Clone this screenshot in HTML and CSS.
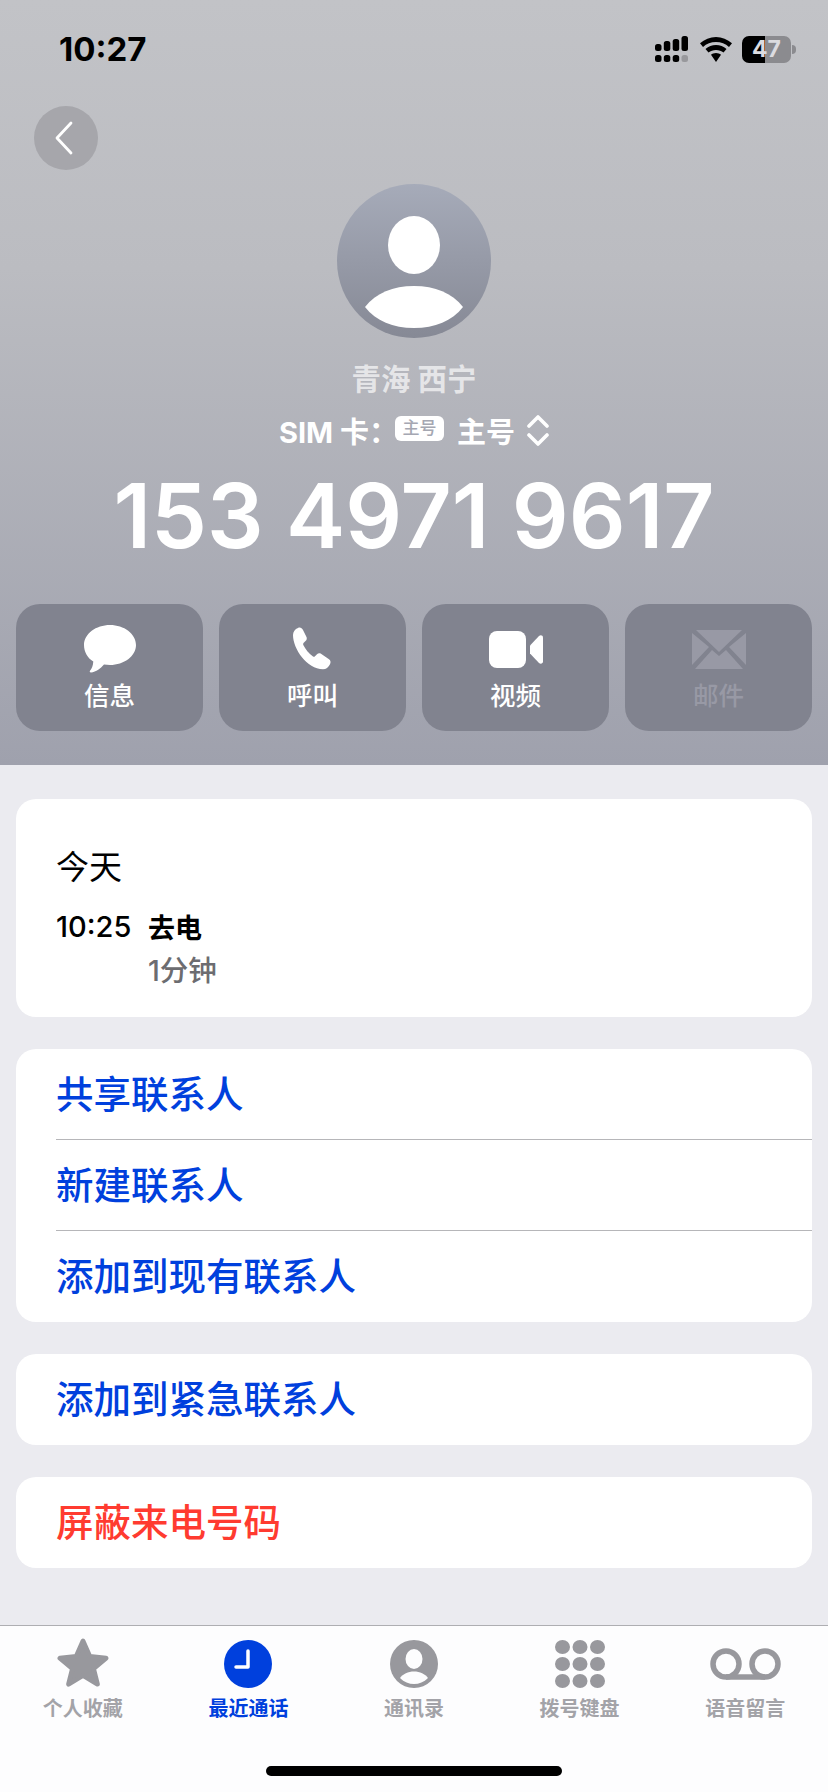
FILE: index.html
```html
<!DOCTYPE html>
<html lang="zh-CN">
<head>
    <meta charset="UTF-8">
    <meta name="viewport" content="width=device-width, initial-scale=1.0">
    <title>青海 西宁</title>
    <link rel="stylesheet" href="styles.css">
</head>
<body>
    <header class="hero">
        <div class="status-bar">
            <span class="clock">10:27</span>
            <div class="status-icons">
                <svg class="signal" width="33" height="26" viewBox="0 0 33 26">
                    <rect x="0" y="8" width="6.500" height="7" rx="2.500"/>
                    <rect x="8.800" y="5" width="6.500" height="10" rx="2.500"/>
                    <rect x="17.700" y="3" width="6.500" height="12" rx="2.500"/>
                    <rect x="26.500" y="0" width="6.500" height="15" rx="2.500"/>
                    <rect x="0" y="19" width="6.500" height="7" rx="2.500"/>
                    <rect x="8.800" y="19" width="6.500" height="7" rx="2.500"/>
                    <rect x="17.700" y="19" width="6.500" height="7" rx="2.500"/>
                    <rect x="26.500" y="19" width="6.500" height="7" rx="2.500" fill="#98989c"/>
                </svg>
                <svg class="wifi" width="32" height="25" viewBox="0 0 32 25">
                    <path d="M16 0C10 0 4.500 2.300 0 6.300l3 3.700C6.500 6.800 11 5 16 5s9.500 1.800 13 5l3-3.700C27.500 2.300 22 0 16 0z"/>
                    <path d="M16 8c-4 0-7.500 1.500-10.500 4l3 3.600C10.500 14 13 13 16 13s5.500 1 7.500 2.600l3-3.600C23.500 9.500 20 8 16 8z"/>
                    <path d="M16 16c-2 0-3.800.7-5 1.800L16 25l5-7.200c-1.200-1.100-3-1.800-5-1.800z"/>
                </svg>
                <div class="battery"><span>47</span></div>
                <div class="battery-nub"></div>
            </div>
        </div>

        <button class="back-btn">
            <svg width="22" height="34" viewBox="0 0 22 34"><path d="M18 2 4 17l14 15" fill="none" stroke="#fff" stroke-width="2.800" stroke-linecap="round" stroke-linejoin="round"/></svg>
        </button>

        <div class="avatar">
            <svg width="154" height="154" viewBox="0 0 154 154">
                <ellipse cx="77" cy="61" rx="26" ry="29" fill="#fff"/>
                <path d="M28 123c11-14 28-21 49-21s38 7 49 21c-11 14-28 21-49 21s-38-7-49-21z" fill="#fff"/>
            </svg>
        </div>
        <div class="place">青海 西宁</div>
        <div class="sim-row">
            <span class="sim-label">SIM 卡：</span>
            <span class="sim-badge">主号</span>
            <span class="sim-name">主号</span>
            <svg width="22" height="31" viewBox="0 0 22 31"><path d="M2 11 11 2l9 9M2 20l9 9 9-9" fill="none" stroke="#fff" stroke-width="3.600" stroke-linecap="round" stroke-linejoin="round"/></svg>
        </div>
        <div class="number">153 4971 9617</div>

        <div class="actions">
            <div class="action">
                <div class="action-icon">
                    <svg width="52" height="48" viewBox="0 0 52 48"><path d="M26 0c14 0 26 8.800 26 20s-12 20-26 20c-2 0-4-.2-6-.5C17 43 12 47 7 47.500c-1.500 0-1.500-1-1-1.700 1.800-2.300 3-5 3.300-9.300C3.500 33 0 27 0 20 0 8.800 12 0 26 0z"/></svg>
                </div>
                <span>信息</span>
            </div>
            <div class="action">
                <div class="action-icon">
                    <svg width="44" height="44" viewBox="0 0 44 44"><path d="M7 1c2-1 4 0 5 2l3.500 7c.6 1.500.3 3-1 4l-2 2c-.5.6-.5 1.300-.2 2 2 4 5.500 8.500 9.700 11.500.7.500 1.400.4 2-.2l2-2c1-1 2.500-1.300 4-.5l8 5.500c1.700 1 2 3 1 5-1.500 3-4 5-7 5C16 42 2 22 2 8c0-3 2-6 5-7z"/></svg>
                </div>
                <span>呼叫</span>
            </div>
            <div class="action">
                <div class="action-icon">
                    <svg width="54" height="37" viewBox="0 0 54 37">
                        <rect x="0" y="0" width="37" height="37" rx="8"/>
                        <path d="M41 14.500 50 5c1.500-1.300 4-.7 4 1.500v24c0 2.200-2.500 2.800-4 1.500l-9-9.500z"/>
                    </svg>
                </div>
                <span>视频</span>
            </div>
            <div class="action action-off">
                <div class="action-icon">
                    <svg width="54" height="39" viewBox="0 0 54 39">
                        <path d="M4 0h46L27 22z"/>
                        <path d="M0 3v32l17-18zM54 3v32L37 17z"/>
                        <path d="M3 39h48L34 20l-7 6-7-6z"/>
                    </svg>
                </div>
                <span>邮件</span>
            </div>
        </div>
    </header>

    <main class="content">
        <section class="card recent">
            <div class="recent-day">今天</div>
            <div class="recent-row">
                <span class="recent-time">10:25</span>
                <div>
                    <div class="recent-type">去电</div>
                    <div class="recent-length">1分钟</div>
                </div>
            </div>
        </section>

        <section class="card">
            <div class="row">共享联系人</div>
            <div class="row">新建联系人</div>
            <div class="row">添加到现有联系人</div>
        </section>

        <section class="card">
            <div class="row">添加到紧急联系人</div>
        </section>

        <section class="card">
            <div class="row row-red">屏蔽来电号码</div>
        </section>
    </main>

    <nav class="tabbar">
        <div class="tab">
            <svg width="54" height="52" viewBox="0 0 54 52"><path d="M27 3l7 16 17 2-13 11 4 16-15-9-15 9 4-16L3 21l17-2z" fill="#98989d" stroke="#98989d" stroke-width="5" stroke-linejoin="round"/></svg>
            <span>个人收藏</span>
        </div>
        <div class="tab tab-on">
            <svg width="48" height="48" viewBox="0 0 48 48">
                <circle cx="24" cy="24" r="24" fill="#0040dd"/>
                <path d="M24 11v16H12" fill="none" stroke="#fff" stroke-width="3.500" stroke-linecap="round" stroke-linejoin="round"/>
            </svg>
            <span>最近通话</span>
        </div>
        <div class="tab">
            <svg width="48" height="48" viewBox="0 0 48 48">
                <circle cx="24" cy="24" r="24" fill="#98989d"/>
                <ellipse cx="24" cy="19" rx="8.500" ry="10" fill="#fdfdfe"/>
                <path d="M10 38c3-4 8-6.500 14-6.500s11 2.500 14 6.500c-4 4-9 6-14 6s-10-2-14-6z" fill="#fdfdfe"/>
            </svg>
            <span>通讯录</span>
        </div>
        <div class="tab">
            <svg width="50" height="48" viewBox="0 0 50 48" fill="#98989d">
                <ellipse cx="7.500" cy="7" rx="7.500" ry="7"/><ellipse cx="25" cy="7" rx="7.500" ry="7"/><ellipse cx="42.500" cy="7" rx="7.500" ry="7"/>
                <ellipse cx="7.500" cy="24" rx="7.500" ry="7"/><ellipse cx="25" cy="24" rx="7.500" ry="7"/><ellipse cx="42.500" cy="24" rx="7.500" ry="7"/>
                <ellipse cx="7.500" cy="41" rx="7.500" ry="7"/><ellipse cx="25" cy="41" rx="7.500" ry="7"/><ellipse cx="42.500" cy="41" rx="7.500" ry="7"/>
            </svg>
            <span>拨号键盘</span>
        </div>
        <div class="tab">
            <svg width="71" height="48" viewBox="0 0 71 48">
                <g fill="none" stroke="#98989d" stroke-width="5.500">
                    <circle cx="16" cy="24" r="13"/>
                    <circle cx="55" cy="24" r="13"/>
                    <path d="M16 37h39"/>
                </g>
            </svg>
            <span>语音留言</span>
        </div>
        <div class="home-bar"></div>
    </nav>
</body>
</html>
```

FILE: styles.css
```css
* {
    box-sizing: border-box;
}
body {
    font-family: Inter, "Noto Sans CJK SC", sans-serif;
    margin: 0;
    padding: 0;
    width: 828px;
    height: 1792px;
    overflow: hidden;
    display: flex;
    flex-direction: column;
    background-color: #ebebf0;
}
.hero {
    height: 765px;
    background: linear-gradient(180deg, #c2c3c7 0%, #bbbcc1 35%, #9fa1ad 100%);
    display: flex;
    flex-direction: column;
    align-items: center;
}
.status-bar {
    width: 100%;
    height: 98px;
    margin-bottom: 2px;
    padding: 0 32px 0 59px;
    display: flex;
    justify-content: space-between;
    align-items: center;
}
.clock {
    font-size: 33px;
    font-weight: 700;
    color: #000;
}
.status-icons {
    display: flex;
    align-items: center;
}
.signal {
    fill: #000;
}
.wifi {
    fill: #000;
    margin: 0 10px 0 12px;
}
.battery {
    width: 49px;
    height: 27px;
    border-radius: 7px;
    background: linear-gradient(90deg, #000 0, #000 23px, #8b8b8f 23px);
    color: #dcdce0;
    font-size: 23px;
    font-weight: 700;
    line-height: 27px;
    text-align: center;
}
.battery-nub {
    width: 4px;
    height: 9px;
    margin-left: 1px;
    border-radius: 0 4px 4px 0;
    background-color: #8b8b8f;
}
.back-btn {
    align-self: flex-start;
    width: 64px;
    height: 64px;
    margin: 6px 0 0 34px;
    padding: 0 4px 0 0;
    border: 0;
    border-radius: 50%;
    background-color: #a6a6ab;
    display: flex;
    justify-content: center;
    align-items: center;
}
.avatar {
    width: 154px;
    height: 154px;
    margin-top: 14px;
    border-radius: 50%;
    background: linear-gradient(180deg, #a6abb9 0%, #868995 100%);
}
.avatar svg {
    display: block;
}
.place {
    margin-top: 21px;
    font-size: 29.500px;
    line-height: 40px;
    font-weight: 700;
    color: rgba(255, 255, 255, 0.66);
}
.sim-row {
    margin-top: 13px;
    height: 36px;
    display: flex;
    align-items: center;
    color: #fff;
    font-size: 29px;
    font-weight: 700;
}
.sim-label {
    margin-right: -3px;
}
.sim-badge {
    width: 49px;
    height: 25px;
    margin: -4px 13px 0 0;
    border-radius: 6px;
    background-color: #fff;
    color: #a5a7b2;
    font-size: 17px;
    line-height: 25px;
    font-weight: 500;
    text-align: center;
}
.sim-name {
    margin-right: 12px;
}
.number {
    margin-top: 18px;
    font-size: 89px;
    line-height: 100px;
    font-weight: 600;
    color: #fff;
    white-space: nowrap;
}
.actions {
    margin-top: 38px;
    width: 100%;
    padding: 0 16px;
    display: flex;
    gap: 16px;
}
.action {
    flex: 1;
    height: 127px;
    border-radius: 24px;
    background-color: #81838f;
    color: #fff;
    fill: #fff;
    display: flex;
    flex-direction: column;
    align-items: center;
    padding-top: 21px;
    font-size: 25.500px;
    line-height: 34px;
    font-weight: 500;
}
.action-icon {
    height: 48px;
    margin-bottom: 6px;
    display: flex;
    align-items: center;
}
.action-off {
    color: #9899a5;
    fill: #9899a5;
}
.content {
    flex: 1;
    padding: 34px 16px 0;
    display: flex;
    flex-direction: column;
    gap: 32px;
}
.card {
    background-color: #fff;
    border-radius: 20px;
}
.recent {
    height: 218px;
    padding: 45px 40px 0;
}
.recent-day {
    font-size: 33px;
    line-height: 46px;
    color: #000;
}
.recent-row {
    margin-top: 19px;
    display: flex;
    color: #000;
}
.recent-time {
    width: 92px;
    font-size: 29px;
    line-height: 36px;
    font-weight: 500;
}
.recent-type {
    font-size: 27px;
    line-height: 40px;
    font-weight: 700;
}
.recent-length {
    margin-top: 2px;
    font-size: 28.500px;
    line-height: 40px;
    font-weight: 500;
    color: #6c6c70;
}
.row {
    height: 91px;
    margin-left: 40px;
    padding-top: 2px;
    font-size: 37.500px;
    line-height: 88px;
    font-weight: 500;
    color: #0040dd;
    border-top: 1px solid #b6b6b9;
}
.row:last-child {
    height: 92px;
}
.row:first-child {
    height: 91px;
    border-top: 0;
}
.row:first-child:not(:last-child) {
    height: 90px;
}
.row-red {
    color: #ff3b30;
}
.tabbar {
    position: relative;
    height: 167px;
    padding: 12px 0 0;
    background-color: #fdfdfe;
    border-top: 1px solid #aeaeb2;
    display: flex;
}
.tab {
    flex: 1;
    display: flex;
    flex-direction: column;
    align-items: center;
    justify-content: flex-end;
    height: 84px;
    font-size: 20px;
    line-height: 26px;
    font-weight: 600;
    color: #a3a3a8;
}
.tab svg {
    margin-bottom: 8px;
}
.tab-on {
    color: #0040dd;
}
.home-bar {
    position: absolute;
    left: 266px;
    bottom: 16px;
    width: 296px;
    height: 10px;
    border-radius: 5px;
    background-color: #000;
}
```
